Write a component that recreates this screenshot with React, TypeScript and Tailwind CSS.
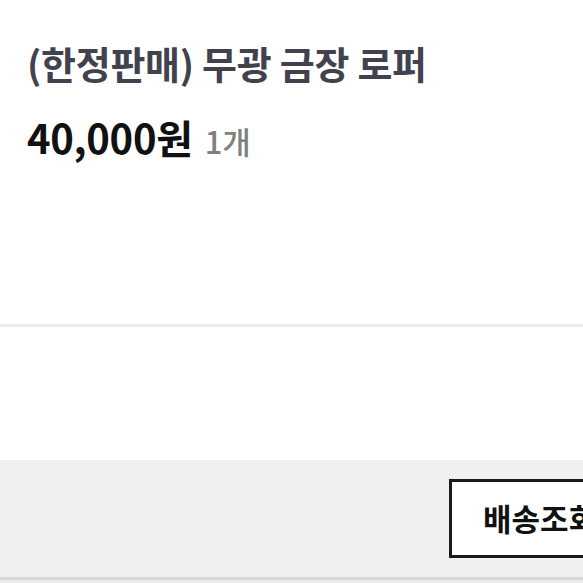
export default function App() {
  return (
    <div className="w-[583px] h-[583px] overflow-hidden bg-white font-['Noto_Sans_CJK_KR',sans-serif]">
      <div className="h-[324px] px-[27px] pt-[35px]">
        <h1 className="text-[38px] leading-[56px] font-bold text-[#42424e] tracking-[-0.3px] whitespace-nowrap">
          (한정판매) 무광 금장 로퍼
        </h1>
        <div className="mt-[22px] flex items-baseline gap-[12px] whitespace-nowrap">
          <span className="text-[40px] leading-[48px] font-bold text-[#111] tracking-[-0.3px]">40,000원</span>
          <span className="text-[31px] leading-[48px] font-medium text-[#808080]">1개</span>
        </div>
      </div>
      <div className="h-[3px] bg-[#ececec]" />
      <div className="h-[133px]" />
      <div className="h-[117px] bg-[#f0f0f0] flex items-center justify-end">
        <button className="w-[150px] h-[79px] -mr-[16px] border-[3px] border-[#1a1a1a] bg-white flex items-center pl-[31px] text-[31px] font-bold text-[#111] whitespace-nowrap overflow-hidden">
          배송조회
        </button>
      </div>
      <div className="h-[3px] bg-[#d8d8d8]" />
      <div className="h-[3px] bg-[#ebebeb]" />
    </div>
  );
}
